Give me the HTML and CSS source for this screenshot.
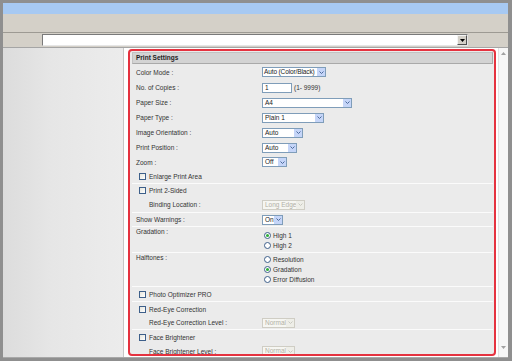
FILE: index.html
```html
<!DOCTYPE html>
<html>
<head>
<meta charset="utf-8">
<link rel="stylesheet" href="styles.css">
</head>
<body>
<div class="win">
  <div class="title"></div>
  <div class="toolbar"></div>
  <div class="addr">
    <div class="combo">
      <span class="combo-btn"><svg width="5" height="3" viewBox="0 0 5 3"><path d="M0 0H5L2.5 3Z" fill="#000"/></svg></span>
    </div>
  </div>
  <div class="main">
    <div class="side"></div>
    <div class="pane">
      <div class="redbox">
        <div class="hdr">Print Settings</div>

        <div class="group">
          <div class="row first"><span class="lbl">Color Mode :</span><span class="sel w64 tight"><span class="v">Auto (Color/Black)</span><span class="b"><svg width="5" height="3" viewBox="0 0 5 3"><path d="M0.5 0.5L2.5 2.5L4.5 0.5" fill="none" stroke="#4c6a9c" stroke-width="1"/></svg></span></span></div>
          <div class="row"><span class="lbl">No. of Copies :</span><span class="inp">1</span><span class="hint">(1- 9999)</span></div>
          <div class="row"><span class="lbl">Paper Size :</span><span class="sel w90"><span class="v">A4</span><span class="b"><svg width="5" height="3" viewBox="0 0 5 3"><path d="M0.5 0.5L2.5 2.5L4.5 0.5" fill="none" stroke="#4c6a9c" stroke-width="1"/></svg></span></span></div>
          <div class="row"><span class="lbl">Paper Type :</span><span class="sel w62"><span class="v">Plain 1</span><span class="b"><svg width="5" height="3" viewBox="0 0 5 3"><path d="M0.5 0.5L2.5 2.5L4.5 0.5" fill="none" stroke="#4c6a9c" stroke-width="1"/></svg></span></span></div>
          <div class="row"><span class="lbl">Image Orientation :</span><span class="sel w41"><span class="v">Auto</span><span class="b"><svg width="5" height="3" viewBox="0 0 5 3"><path d="M0.5 0.5L2.5 2.5L4.5 0.5" fill="none" stroke="#4c6a9c" stroke-width="1"/></svg></span></span></div>
          <div class="row"><span class="lbl">Print Position :</span><span class="sel w35"><span class="v">Auto</span><span class="b"><svg width="5" height="3" viewBox="0 0 5 3"><path d="M0.5 0.5L2.5 2.5L4.5 0.5" fill="none" stroke="#4c6a9c" stroke-width="1"/></svg></span></span></div>
          <div class="row h14"><span class="lbl">Zoom :</span><span class="sel w25"><span class="v">Off</span><span class="b"><svg width="5" height="3" viewBox="0 0 5 3"><path d="M0.5 0.5L2.5 2.5L4.5 0.5" fill="none" stroke="#4c6a9c" stroke-width="1"/></svg></span></span></div>
          <div class="row chk h14"><span class="cb"></span>Enlarge Print Area</div>
        </div>

        <div class="group sep">
          <div class="row chk h13"><span class="cb"></span>Print 2-Sided</div>
          <div class="row"><span class="lbl ind">Binding Location :</span><span class="sel dis w43"><span class="v">Long Edge</span><span class="b"><svg width="5" height="3" viewBox="0 0 5 3"><path d="M0.5 0.5L2.5 2.5L4.5 0.5" fill="none" stroke="#c8c8c0" stroke-width="1"/></svg></span></span></div>
        </div>

        <div class="group sep">
          <div class="row h13"><span class="lbl">Show Warnings :</span><span class="sel w21"><span class="v">On</span><span class="b"><svg width="5" height="3" viewBox="0 0 5 3"><path d="M0.5 0.5L2.5 2.5L4.5 0.5" fill="none" stroke="#4c6a9c" stroke-width="1"/></svg></span></span></div>
        </div>

        <div class="group sep">
          <div class="row multi"><span class="lbl">Gradation :</span>
            <div class="radios grad">
              <div class="rad"><span class="ro on"></span>High 1</div>
              <div class="rad"><span class="ro"></span>High 2</div>
            </div>
          </div>
        </div>

        <div class="group sep">
          <div class="row multi"><span class="lbl">Halftones :</span>
            <div class="radios">
              <div class="rad"><span class="ro"></span>Resolution</div>
              <div class="rad"><span class="ro on"></span>Gradation</div>
              <div class="rad"><span class="ro"></span>Error Diffusion</div>
            </div>
          </div>
        </div>

        <div class="group sep">
          <div class="row chk h14"><span class="cb"></span>Photo Optimizer PRO</div>
        </div>

        <div class="group sep">
          <div class="row chk h14"><span class="cb"></span>Red-Eye Correction</div>
          <div class="row h13"><span class="lbl ind">Red-Eye Correction Level :</span><span class="sel dis w33"><span class="v">Normal</span><span class="b"><svg width="5" height="3" viewBox="0 0 5 3"><path d="M0.5 0.5L2.5 2.5L4.5 0.5" fill="none" stroke="#c8c8c0" stroke-width="1"/></svg></span></span></div>
        </div>

        <div class="group sep">
          <div class="row chk h14"><span class="cb"></span>Face Brightener</div>
          <div class="row h14"><span class="lbl ind">Face Brightener Level :</span><span class="sel dis w33"><span class="v">Normal</span><span class="b"><svg width="5" height="3" viewBox="0 0 5 3"><path d="M0.5 0.5L2.5 2.5L4.5 0.5" fill="none" stroke="#c8c8c0" stroke-width="1"/></svg></span></span></div>
        </div>
      </div>
      <div class="vscroll">
        <svg width="5" height="3" viewBox="0 0 5 3"><path d="M0 3H5L2.5 0Z" fill="#a0a0a0"/></svg>
        <svg width="5" height="3" viewBox="0 0 5 3"><path d="M0 0H5L2.5 3Z" fill="#a0a0a0"/></svg>
      </div>
    </div>
  </div>
</div>
</body>
</html>
```
FILE: styles.css
```css
body {
  margin: 0;
  width: 512px;
  height: 361px;
  overflow: hidden;
  font-family: "Liberation Sans", Arial, sans-serif;
}

.win {
  box-sizing: border-box;
  width: 512px;
  height: 361px;
  border-style: solid;
  border-color: #8f8f8f;
  border-width: 3px 4px 3px 3px;
  display: flex;
  flex-direction: column;
  background: #d4d0c8;
}

.title {
  flex: none;
  height: 11px;
  background: #a7c9f2;
}

.toolbar {
  flex: none;
  height: 18px;
  background: #d4d0c8;
}

.addr {
  flex: none;
  height: 14px;
  border-top: 1px solid #9d9a93;
  background: #d4d0c8;
  padding-left: 39px;
}

.combo {
  box-sizing: border-box;
  margin-top: 1px;
  width: 426px;
  height: 12px;
  background: #fff;
  border: 1px solid;
  border-color: #7a7a7a #e6e6e6 #e6e6e6 #7a7a7a;
  display: flex;
  justify-content: flex-end;
}

.combo-btn {
  box-sizing: border-box;
  width: 10px;
  height: 10px;
  background: #d4d0c8;
  border: 1px solid;
  border-color: #f4f4f4 #505050 #505050 #f4f4f4;
  display: flex;
  align-items: center;
  justify-content: center;
}

.main {
  flex: 1;
  min-height: 0;
  display: flex;
  border-top: 1px solid #a5a5a5;
  border-bottom: 1px solid #a8a8a8;
  background: #fff;
}

.side {
  flex: none;
  width: 120px;
  border-right: 1px solid #c6c6c6;
  background: linear-gradient(to right, #dcdcdc, #e6e6e6 40%, #ececec);
}

.pane {
  flex: 1;
  display: flex;
  background: #fff;
}

.redbox {
  flex: none;
  box-sizing: border-box;
  margin: 1px 0 0 4px;
  width: 368px;
  height: 307px;
  border: 2px solid #e5323f;
  border-radius: 4px;
  padding: 1px 1px 0 2px;
  background: #ebebeb;
  overflow: hidden;
}

.hdr {
  box-sizing: border-box;
  height: 12px;
  background: #d3d3d3;
  border: 1px solid;
  border-color: #c2c2c2 #a9a9a9 #a9a9a9 #c2c2c2;
  font-weight: bold;
  font-size: 6.5px;
  line-height: 10px;
  padding-left: 3px;
  color: #222;
}

.sep {
  border-top: 1px solid #fbfbfb;
}

.row {
  box-sizing: border-box;
  display: flex;
  align-items: center;
  height: 15px;
  padding-left: 4px;
  font-size: 6.5px;
  color: #333;
  white-space: nowrap;
}

.row.first { height: 16px; }
.row.h14 { height: 14px; }
.row.h13 { height: 13px; }

.row.chk {
  padding-left: 7px;
}

.lbl {
  box-sizing: border-box;
  flex: none;
  width: 126px;
}

.lbl.ind {
  padding-left: 13px;
}

.row.multi {
  height: auto;
  align-items: flex-start;
  padding-top: 1px;
  padding-bottom: 2px;
}

.row.multi .lbl {
  line-height: 8px;
}

.radios.grad {
  margin-top: 2px;
}

.rad {
  display: flex;
  align-items: center;
  height: 10px;
}

.ro {
  box-sizing: border-box;
  width: 7px;
  height: 7px;
  border-radius: 50%;
  border: 1px solid #3d5f8a;
  background: #fff;
  margin: 0 2px 0 2px;
  display: flex;
  align-items: center;
  justify-content: center;
}

.ro.on::after {
  content: "";
  width: 3px;
  height: 3px;
  border-radius: 50%;
  background: #2fae3a;
}

.cb {
  box-sizing: border-box;
  flex: none;
  width: 7px;
  height: 7px;
  border: 1px solid #3d5f8a;
  background: linear-gradient(135deg, #e4e4dc, #fff);
  margin-right: 3px;
}

.sel {
  box-sizing: border-box;
  display: inline-flex;
  align-items: center;
  height: 10px;
  border: 1px solid #7f9db9;
  background: #fff;
  color: #222;
}

.sel .v {
  flex: 1;
  padding-left: 2px;
  line-height: 8px;
  overflow: hidden;
}

.sel.tight .v {
  padding-left: 1px;
  letter-spacing: -0.12px;
}

.sel .b {
  flex: none;
  width: 8px;
  height: 8px;
  background: #c5d5f8;
  display: flex;
  align-items: center;
  justify-content: center;
}

.sel.dis {
  border-color: #cfcdc4;
  background: #f6f6f2;
  color: #b2b0a6;
}

.sel.dis .b {
  background: #eeeee8;
}

.w64 { width: 64px; }
.w62 { width: 62px; }
.w90 { width: 90px; }
.w41 { width: 41px; }
.w35 { width: 35px; }
.w25 { width: 25px; }
.w43 { width: 43px; }
.w21 { width: 21px; }
.w33 { width: 33px; }

.inp {
  box-sizing: border-box;
  width: 30px;
  height: 10px;
  border: 1px solid #7f9db9;
  background: #fff;
  padding-left: 2px;
  line-height: 8px;
  color: #222;
}

.hint {
  margin-left: 2px;
}

.vscroll {
  flex: none;
  margin-left: auto;
  width: 10px;
  box-sizing: border-box;
  display: flex;
  flex-direction: column;
  justify-content: space-between;
  align-items: center;
  padding: 4px 0 8px;
  background: #f6f6f6;
  border-left: 1px solid #e2e2e2;
}
```
